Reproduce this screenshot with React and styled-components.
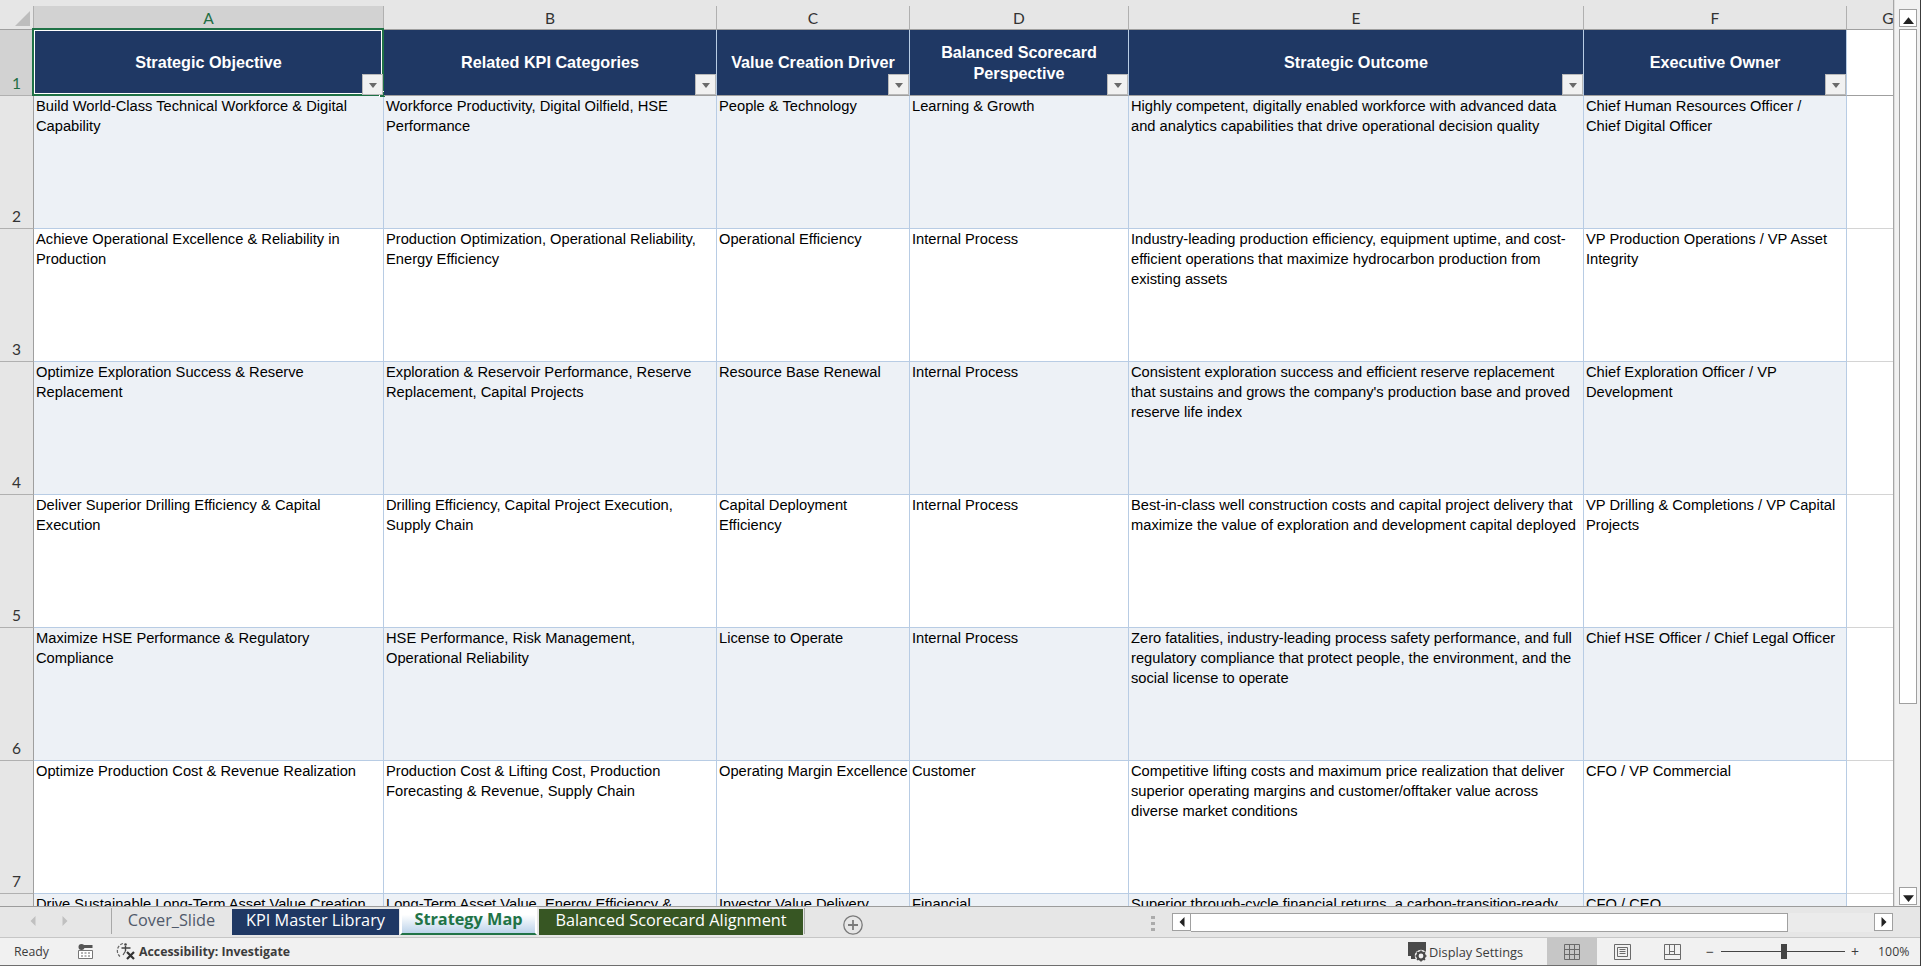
import React from "react"
import styled, { createGlobalStyle } from "styled-components"

const GlobalStyle = createGlobalStyle`
  html, body {
    margin: 0;
    padding: 0;
    background: #f1f1f1;
  }
`

const columns = ["A", "B", "C", "D", "E", "F", "G"]

const headers = [
  ["Strategic Objective"],
  ["Related KPI Categories"],
  ["Value Creation Driver"],
  ["Balanced Scorecard", "Perspective"],
  ["Strategic Outcome"],
  ["Executive Owner"],
]

const rows = [
  [
    ["Build World-Class Technical Workforce & Digital", "Capability"],
    ["Workforce Productivity, Digital Oilfield, HSE", "Performance"],
    ["People & Technology"],
    ["Learning & Growth"],
    ["Highly competent, digitally enabled workforce with advanced data", "and analytics capabilities that drive operational decision quality"],
    ["Chief Human Resources Officer /", "Chief Digital Officer"],
  ],
  [
    ["Achieve Operational Excellence & Reliability in", "Production"],
    ["Production Optimization, Operational Reliability,", "Energy Efficiency"],
    ["Operational Efficiency"],
    ["Internal Process"],
    ["Industry-leading production efficiency, equipment uptime, and cost-", "efficient operations that maximize hydrocarbon production from", "existing assets"],
    ["VP Production Operations / VP Asset", "Integrity"],
  ],
  [
    ["Optimize Exploration Success & Reserve", "Replacement"],
    ["Exploration & Reservoir Performance, Reserve", "Replacement, Capital Projects"],
    ["Resource Base Renewal"],
    ["Internal Process"],
    ["Consistent exploration success and efficient reserve replacement", "that sustains and grows the company's production base and proved", "reserve life index"],
    ["Chief Exploration Officer / VP", "Development"],
  ],
  [
    ["Deliver Superior Drilling Efficiency & Capital", "Execution"],
    ["Drilling Efficiency, Capital Project Execution,", "Supply Chain"],
    ["Capital Deployment", "Efficiency"],
    ["Internal Process"],
    ["Best-in-class well construction costs and capital project delivery that", "maximize the value of exploration and development capital deployed"],
    ["VP Drilling & Completions / VP Capital", "Projects"],
  ],
  [
    ["Maximize HSE Performance & Regulatory", "Compliance"],
    ["HSE Performance, Risk Management,", "Operational Reliability"],
    ["License to Operate"],
    ["Internal Process"],
    ["Zero fatalities, industry-leading process safety performance, and full", "regulatory compliance that protect people, the environment, and the", "social license to operate"],
    ["Chief HSE Officer / Chief Legal Officer"],
  ],
  [
    ["Optimize Production Cost & Revenue Realization"],
    ["Production Cost & Lifting Cost, Production", "Forecasting & Revenue, Supply Chain"],
    ["Operating Margin Excellence"],
    ["Customer"],
    ["Competitive lifting costs and maximum price realization that deliver", "superior operating margins and customer/offtaker value across", "diverse market conditions"],
    ["CFO / VP Commercial"],
  ],
  [
    ["Drive Sustainable Long-Term Asset Value Creation"],
    ["Long-Term Asset Value, Energy Efficiency &"],
    ["Investor Value Delivery"],
    ["Financial"],
    ["Superior through-cycle financial returns, a carbon-transition-ready"],
    ["CFO / CEO"],
  ],
]

const Page = styled.div`
  width: 1921px;
  height: 966px;
  display: flex;
  flex-direction: column;
  overflow: hidden;
  border-right: 1px solid #3c3c3c;
  box-sizing: border-box;
`

const SheetArea = styled.div`
  height: 906px;
  display: flex;
  flex: none;
`

const Grid = styled.div`
  width: 1894px;
  flex: none;
  display: grid;
  grid-template-columns: 34px 350px 333px 193px 219px 455px 263px 47px;
  grid-template-rows: 24px 66px repeat(7, 133px);
  padding-top: 6px;
  background: #e6e6e6;
  overflow: hidden;
  box-sizing: border-box;
  border-right: 1px solid #a6a6a6;
  font-family: "Liberation Sans", Arial, sans-serif;
`

const Corner = styled.div`
  background: #e6e6e6;
  border-right: 1px solid #b0b0b0;
  border-bottom: 1px solid #9f9f9f;
  display: flex;
  align-items: flex-end;
  justify-content: flex-end;
  padding: 0 3px 3px 0;
  box-sizing: border-box;

  &::before {
    content: "";
    width: 15px;
    height: 15px;
    background: #bdbdbd;
    clip-path: polygon(100% 0, 100% 100%, 0 100%);
  }
`

const ColumnHead = styled.div`
  display: flex;
  align-items: center;
  justify-content: center;
  box-sizing: border-box;
  padding-left: ${(p) => (p.$cut ? "35px" : "0")};
  font: 15.5px Lato, "Open Sans", sans-serif;
  color: ${(p) => (p.$active ? "#1f6e43" : "#333")};
  background: ${(p) => (p.$active ? "#d2d2d2" : "#e6e6e6")};
  border-right: ${(p) => (p.$cut ? "0" : "1px solid #b0b0b0")};
  border-bottom: 1px solid #9f9f9f;
`

const RowHead = styled.div`
  display: flex;
  align-items: flex-end;
  justify-content: center;
  box-sizing: border-box;
  padding-bottom: 2px;
  font: 15.5px/19px Lato, "Open Sans", sans-serif;
  color: ${(p) => (p.$active ? "#1f6e43" : "#333")};
  background: ${(p) => (p.$active ? "#d2d2d2" : "#e6e6e6")};
  border-right: 1px solid #9f9f9f;
  border-bottom: 1px solid #b0b0b0;
`

const HeaderCell = styled.div`
  position: relative;
  display: flex;
  flex-direction: column;
  align-items: center;
  justify-content: center;
  box-sizing: border-box;
  background: #1f3864;
  color: #fff;
  font-size: 16.2px;
  font-weight: 700;
  line-height: 21px;
  border-right: 1px solid #b8cce4;
  border-bottom: 1px solid #9f9f9f;
  white-space: nowrap;
`

const Selection = styled.div`
  position: absolute;
  inset: -2px -1px -1px -2px;
  border: 2px solid #1f7246;
  box-shadow: inset 0 0 0 1px #fff;

  &::after {
    content: "";
    position: absolute;
    right: -3px;
    bottom: -3px;
    width: 5px;
    height: 5px;
    background: #1f7246;
    border: 1px solid #fff;
    border-width: 1px 0 0 1px;
  }
`

const FilterButton = styled.div`
  position: absolute;
  right: 0;
  bottom: 0;
  width: 21px;
  height: 21px;
  box-sizing: border-box;
  display: flex;
  align-items: center;
  justify-content: center;
  background: #f1f1f1;
  border: 1px solid #b9b9b9;

  &::before {
    content: "";
    width: 0;
    height: 0;
    margin-top: 2px;
    border-left: 4px solid transparent;
    border-right: 4px solid transparent;
    border-top: 5px solid #6a6a6a;
  }
`

const Cell = styled.div`
  box-sizing: border-box;
  padding: 0 0 0 2px;
  overflow: hidden;
  background: ${(p) => (p.$shaded ? "#edf1f6" : "#fff")};
  color: #000;
  font-size: 14.7px;
  line-height: 20px;
  white-space: nowrap;
  border-right: 1px solid #b8cce4;
  border-bottom: 1px solid #b8cce4;
`

const SpareCell = styled.div`
  background: #fff;
  border-bottom: 1px solid ${(p) => (p.$strong ? "#9f9f9f" : "#d4d4d4")};
`

const Line = styled.span`
  display: block;
`

const VScroll = styled.div`
  flex: 1;
  display: flex;
  flex-direction: column;
  gap: 2px;
  padding: 9px 3px 1px 4px;
  background: #f1f1f1;
  border-left: 1px solid #dcdcdc;
`

const ScrollButton = styled.div`
  flex: none;
  width: ${(p) => (p.$wide ? "19px" : "auto")};
  height: 18px;
  box-sizing: border-box;
  display: flex;
  align-items: center;
  justify-content: center;
  background: #fff;
  border: 1px solid #a0a0a0;
`

const VThumb = styled.div`
  height: 675px;
  background: #fff;
  border: 1px solid #a0a0a0;
  box-sizing: border-box;
`

const VSpacer = styled.div`
  flex: 1;
`

const TabBar = styled.div`
  height: 32px;
  flex: none;
  display: flex;
  align-items: flex-start;
  box-sizing: border-box;
  background: #e6e6e6;
  border-top: 1px solid #9c9c9c;
  border-bottom: 1px solid #c6c6c6;
`

const TabNav = styled.div`
  width: 112px;
  height: 26px;
  box-sizing: border-box;
  display: flex;
  align-items: center;
  gap: 22px;
  padding-left: 28px;
  border-right: 1px solid #a8a8a8;
  flex: none;
  margin-top: 1px;
`

const Tab = styled.div`
  box-sizing: border-box;
  height: ${(p) => (p.$kind === "active" ? "28px" : "26px")};
  width: ${(p) => p.$width}px;
  padding-bottom: 5px;
  margin-top: ${(p) => (p.$kind === "active" ? "0" : "2px")};
  margin-right: ${(p) => (p.$kind === "active" ? "2px" : "1px")};
  display: flex;
  align-items: center;
  justify-content: center;
  font-family: "Open Sans", "Noto Sans", sans-serif;
  font-size: 16.3px;
  white-space: nowrap;
  ${(p) =>
    ({
      plain: "background: #e6e6e6; color: #50596a;",
      navy: "background: #1f3864; color: #fff;",
      active:
        "background: linear-gradient(#fff 30%, #bcd3ea); color: #217346; font-weight: 700; border: 2px solid #fff; border-top-width: 0; border-bottom: 2px solid #217346; box-shadow: 0 2px 0 #fff inset; padding-bottom: 3px;",
      green: "background: #375623; color: #fff;",
    })[p.$kind]}
`

const TabDivider = styled.div`
  width: 1px;
  height: 26px;
  margin-top: 1px;
  background: #a8a8a8;
  flex: none;
`

const AddSheet = styled.div`
  margin: 8px 0 0 38px;
  width: 20px;
  height: 20px;
  flex: none;
  color: #7a7a7a;
  display: flex;
`

const ResizeDots = styled.div`
  flex: none;
  margin: 9px 0 0 288px;
  width: 4px;
  height: 15px;
  background: repeating-linear-gradient(#ababab 0 3px, transparent 3px 6px);
`

const HScroll = styled.div`
  flex: none;
  width: 721px;
  height: 19px;
  margin: 6px 0 0 17px;
  display: flex;
`

const HThumb = styled.div`
  width: 597px;
  background: #fff;
  border: 1px solid #a0a0a0;
  border-left: 0;
  box-sizing: border-box;
`

const HTrack = styled.div`
  flex: 1;
  background: #ebebeb;
`

const StatusBar = styled.div`
  flex: 1;
  display: flex;
  align-items: center;
  background: #f1f1f1;
  border-bottom: 1px solid #6e6e6e;
  font-family: "Open Sans", "Noto Sans", sans-serif;
  font-size: 12.3px;
  color: #3c3c3c;
`

const StatusText = styled.span`
  font-weight: ${(p) => (p.$bold ? 700 : 400)};
  font-size: ${(p) => p.$size || 12.3}px;
  margin-left: ${(p) => p.$gap || 0}px;
  white-space: nowrap;
`

const StatusIcon = styled.span`
  display: flex;
  flex: none;
  margin-left: ${(p) => p.$gap || 0}px;
`

const ViewGroup = styled.div`
  flex: none;
  align-self: stretch;
  display: flex;
  margin-left: 24px;
`

const ViewButton = styled.div`
  flex: none;
  width: 50px;
  display: flex;
  align-items: center;
  justify-content: center;
  background: ${(p) => (p.$active ? "#c6c6c6" : "transparent")};
`

const ZoomSlider = styled.div`
  position: relative;
  flex: none;
  width: 124px;
  height: 1px;
  margin-left: 7px;
  background: #444;

  &::after {
    content: "";
    position: absolute;
    left: 60px;
    top: -7px;
    width: 6px;
    height: 15px;
    background: #444;
  }
`

function MacroIcon() {
  return (
    <svg width="15" height="15" viewBox="0 0 15 15">
      <circle cx="3.5" cy="3" r="3" fill="#555" />
      <rect x="6" y="1" width="8.5" height="3" fill="#555" />
      <path d="M.5 6.5h14v8H.5z" fill="#fff" stroke="#777" />
      <path d="M3 9h2M6.5 9h2M10 9h2M3 12h2M6.5 12h2M10 12h2" stroke="#666" />
    </svg>
  )
}

function AccessibilityIcon() {
  return (
    <svg width="21" height="19" viewBox="0 0 21 19" fill="none">
      <path d="M7 1.5A7.5 7.5 0 0 0 4 14.5" stroke="#666" strokeDasharray="3 1.5" strokeWidth="1.2" />
      <circle cx="9.5" cy="2.5" r="1.3" fill="#444" />
      <path d="M5.5 6h9M9.5 4v5" stroke="#444" strokeWidth="1.4" />
      <path d="M9.5 9l-2.5 4" stroke="#555" strokeWidth="1.2" />
      <path d="M11 10l7 7M18 10l-7 7" stroke="#333" strokeWidth="2.2" />
    </svg>
  )
}

function DisplayIcon() {
  return (
    <svg width="21" height="22" viewBox="0 0 21 22">
      <path d="M1 1h18v14H9v3H4v-3H1z" fill="#4a4a4a" />
      <circle cx="14" cy="15" r="6.2" fill="#f1f1f1" />
      <circle cx="14" cy="15" r="3.6" fill="none" stroke="#4a4a4a" strokeWidth="2.4" />
      <path d="M14 9.5v2M14 18.5v2M8.5 15h2M17.5 15h2M10 11l1.5 1.5M16.5 17.5L18 19M18 11l-1.5 1.5M11.5 17.5L10 19" stroke="#4a4a4a" strokeWidth="1.6" />
    </svg>
  )
}

function NormalViewIcon() {
  return (
    <svg width="16" height="16" viewBox="0 0 16 16" fill="none" stroke="#6a6a6a">
      <path d="M.5.5h15v15H.5zM5.5.5v15M10.5.5v15M.5 5.5h15M.5 10.5h15" />
    </svg>
  )
}

function PageViewIcon() {
  return (
    <svg width="17" height="16" viewBox="0 0 17 16" fill="none" stroke="#6a6a6a">
      <path d="M.5.5h16v15H.5zM3.5 3.5h10v9h-10zM5.5 5.5h6M5.5 7.5h6M5.5 9.5h6" />
    </svg>
  )
}

function BreakViewIcon() {
  return (
    <svg width="17" height="16" viewBox="0 0 17 16" fill="none" stroke="#6a6a6a">
      <path d="M.5.5h16v15H.5zM.5 10.5h16M5.5.5v10M10.5.5v10M5.5 7.5h5" />
    </svg>
  )
}

function Triangle({ dir, color = "#222", size = 8 }) {
  const points = {
    up: "0,8 8,8 4,3",
    down: "0,3 8,3 4,8",
    left: "6,0 6,8 2,4",
    right: "2,0 2,8 6,4",
  }[dir]
  return (
    <svg width={size} height={size} viewBox="0 0 8 8">
      <polygon points={points} fill={color} />
    </svg>
  )
}

export default function App() {
  return (
    <>
      <GlobalStyle />
      <Page>
        <SheetArea>
          <Grid>
            <Corner />
            {columns.map((col, i) => (
              <ColumnHead key={col} $active={i === 0} $cut={col === "G"}>
                {col}
              </ColumnHead>
            ))}

            <RowHead $active>1</RowHead>
            {headers.map((lines, i) => (
              <HeaderCell key={i}>
                {lines.map((line) => (
                  <Line key={line}>{line}</Line>
                ))}
                {i === 0 && <Selection />}
                <FilterButton />
              </HeaderCell>
            ))}
            <SpareCell $strong />

            {rows.map((row, r) => (
              <React.Fragment key={r}>
                <RowHead>{r + 2}</RowHead>
                {row.map((lines, c) => (
                  <Cell key={c} $shaded={r % 2 === 0}>
                    {lines.map((line) => (
                      <Line key={line}>{line}</Line>
                    ))}
                  </Cell>
                ))}
                <SpareCell />
              </React.Fragment>
            ))}
          </Grid>

          <VScroll>
            <ScrollButton>
              <Triangle dir="up" size={11} />
            </ScrollButton>
            <VThumb />
            <VSpacer />
            <ScrollButton>
              <Triangle dir="down" size={11} />
            </ScrollButton>
          </VScroll>
        </SheetArea>

        <TabBar>
          <TabNav>
            <Triangle dir="left" color="#c0c0c0" size={10} />
            <Triangle dir="right" color="#c0c0c0" size={10} />
          </TabNav>
          <Tab $kind="plain" $width={119}>Cover_Slide</Tab>
          <Tab $kind="navy" $width={167}>KPI Master Library</Tab>
          <Tab $kind="active" $width={137}>Strategy Map</Tab>
          <Tab $kind="green" $width={264}>Balanced Scorecard Alignment</Tab>
          <TabDivider />
          <AddSheet>
            <svg width="20" height="20" viewBox="0 0 20 20" fill="none" stroke="currentColor">
              <circle cx="10" cy="10" r="9.2" strokeWidth="1.3" />
              <path d="M10 5v10M5 10h10" strokeWidth="1.8" />
            </svg>
          </AddSheet>
          <ResizeDots />
          <HScroll>
            <ScrollButton $wide>
              <Triangle dir="left" size={10} />
            </ScrollButton>
            <HThumb />
            <HTrack />
            <ScrollButton $wide>
              <Triangle dir="right" size={10} />
            </ScrollButton>
          </HScroll>
        </TabBar>

        <StatusBar>
          <StatusText $gap={14}>Ready</StatusText>
          <StatusIcon $gap={29}>
            <MacroIcon />
          </StatusIcon>
          <StatusIcon $gap={23}>
            <AccessibilityIcon />
          </StatusIcon>
          <StatusText $gap={2} $bold>Accessibility: Investigate</StatusText>
          <StatusIcon $gap={1117}>
            <DisplayIcon />
          </StatusIcon>
          <StatusText $gap={1} $size={12.8}>Display Settings</StatusText>
          <ViewGroup>
            <ViewButton $active>
              <NormalViewIcon />
            </ViewButton>
            <ViewButton>
              <PageViewIcon />
            </ViewButton>
            <ViewButton>
              <BreakViewIcon />
            </ViewButton>
          </ViewGroup>
          <StatusText $gap={9} $size={14}>−</StatusText>
          <ZoomSlider />
          <StatusText $gap={6} $size={14}>+</StatusText>
          <StatusText $gap={19}>100%</StatusText>
        </StatusBar>
      </Page>
    </>
  )
}
